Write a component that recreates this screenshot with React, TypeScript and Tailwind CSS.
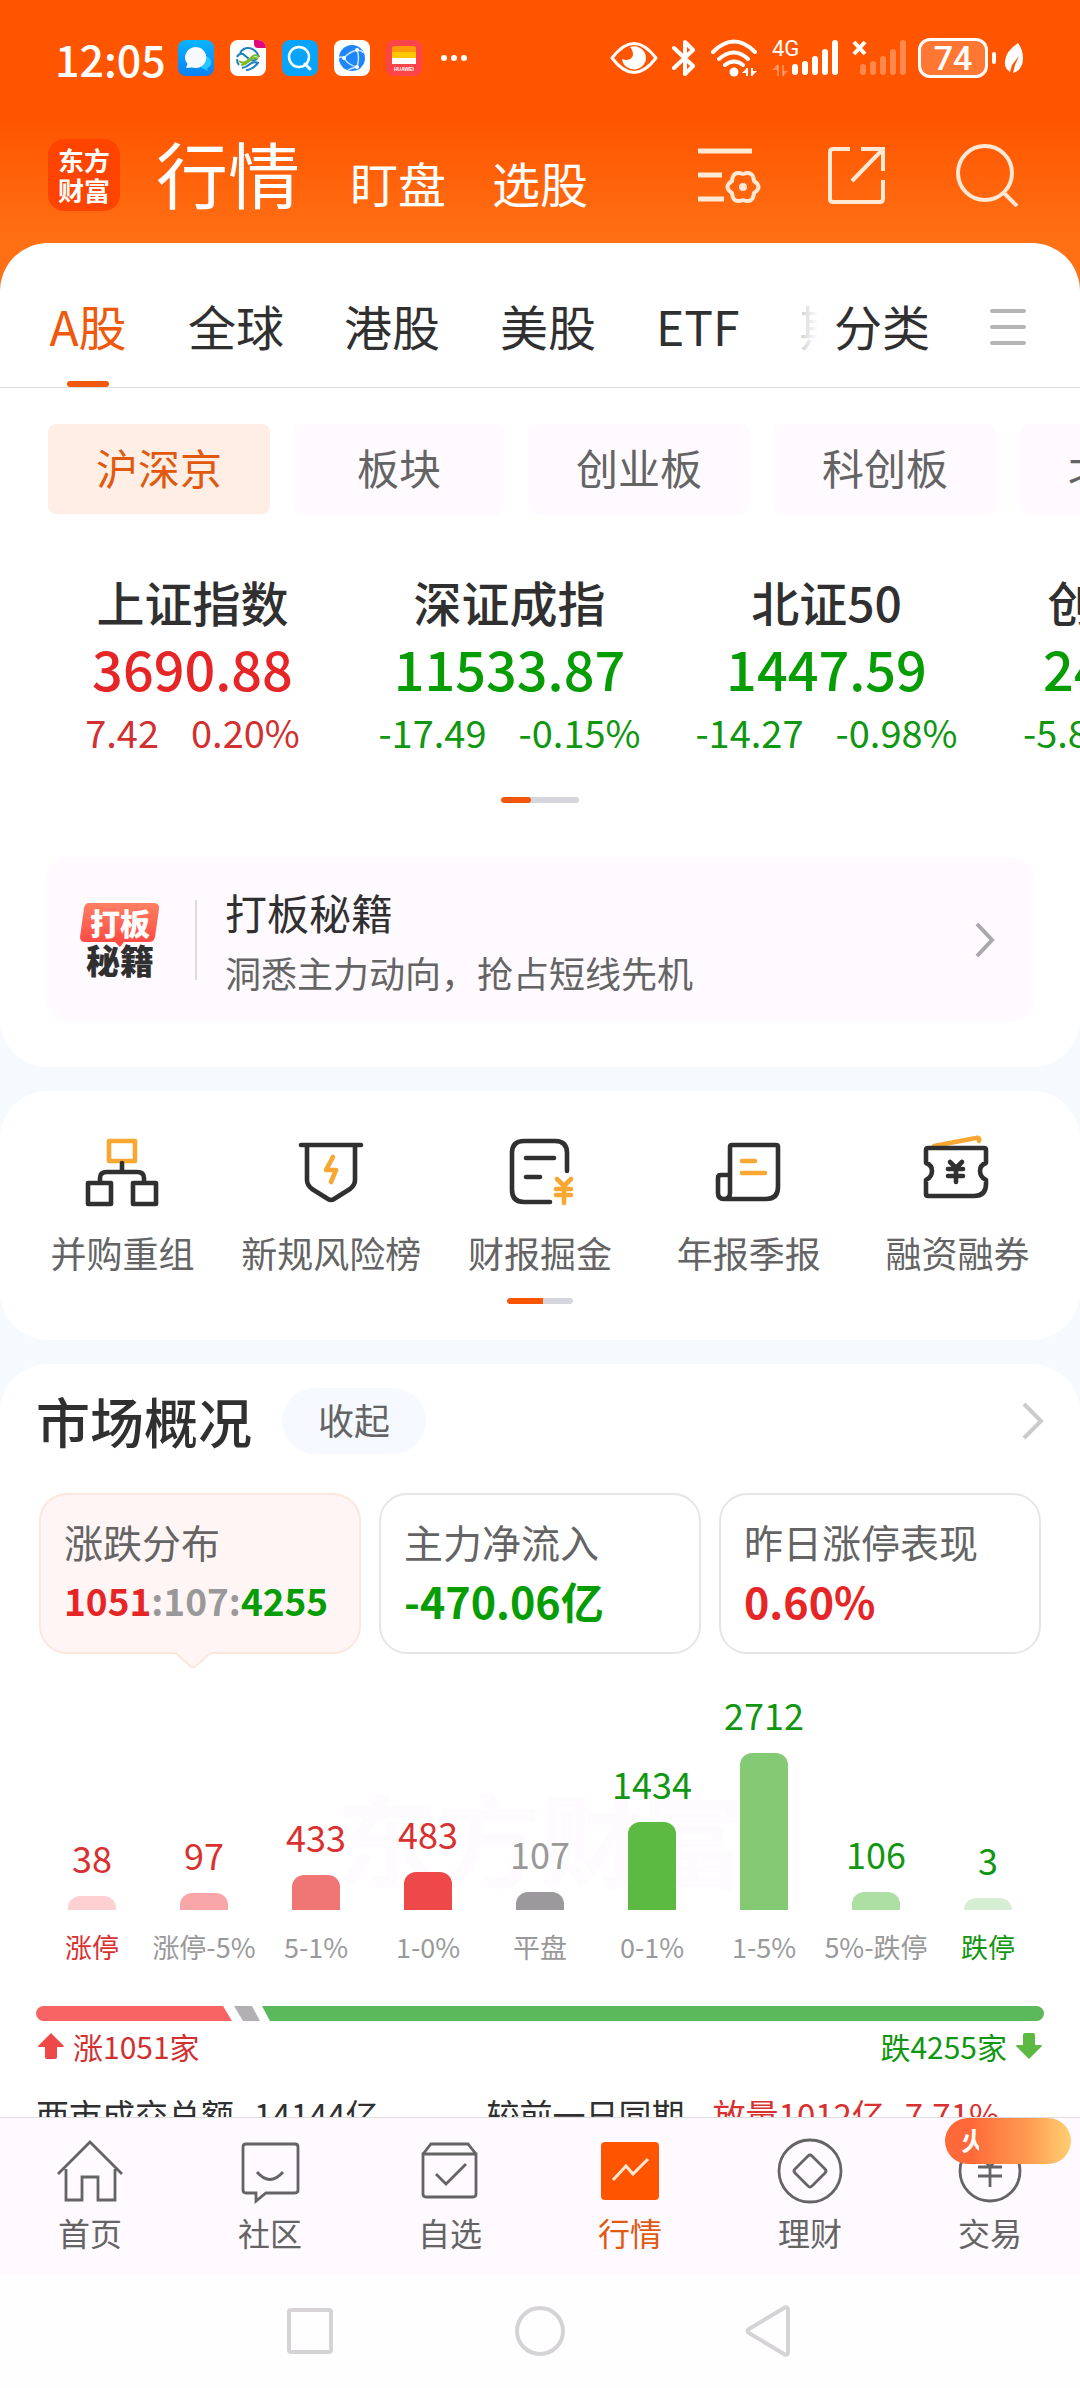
import React from "react";

const RED = "text-[#d93030]";
const GREEN = "text-[#109610]";

const markets = ["全球", "港股", "美股", "ETF", "期货"];
const boards = ["沪深京", "板块", "创业板", "科创板", "北交所"];

const indices = [
  { name: "上证指数", value: "3690.88", diff: "7.42", pct: "0.20%", up: true },
  { name: "深证成指", value: "11533.87", diff: "-17.49", pct: "-0.15%", up: false },
  { name: "北证50", value: "1447.59", diff: "-14.27", pct: "-0.98%", up: false },
  { name: "创业板指", value: "2458.75", diff: "-5.84", pct: "-0.24%", up: false },
];

const bars = [
  { count: 38, label: "涨停", h: 14, bar: "bg-[#fdd0d2]", num: RED, cap: RED },
  { count: 97, label: "涨停-5%", h: 17, bar: "bg-[#f8a6a8]", num: RED, cap: "text-[#999999]" },
  { count: 433, label: "5-1%", h: 35, bar: "bg-[#f07676]", num: RED, cap: "text-[#999999]" },
  { count: 483, label: "1-0%", h: 38, bar: "bg-[#ee4849]", num: RED, cap: "text-[#999999]" },
  { count: 107, label: "平盘", h: 18, bar: "bg-[#9b999c]", num: "text-[#999999]", cap: "text-[#999999]" },
  { count: 1434, label: "0-1%", h: 88, bar: "bg-[#5cb941]", num: GREEN, cap: "text-[#999999]" },
  { count: 2712, label: "1-5%", h: 157, bar: "bg-[#84ca74]", num: GREEN, cap: "text-[#999999]" },
  { count: 106, label: "5%-跌停", h: 18, bar: "bg-[#addfa4]", num: GREEN, cap: "text-[#999999]" },
  { count: 3, label: "跌停", h: 12, bar: "bg-[#d6efd4]", num: GREEN, cap: GREEN },
];

function StatusBar() {
  return (
    <div className="flex h-[116px] items-center justify-between pl-[55px] pr-[56px] text-white">
      <div className="flex items-center gap-4">
        <span className="-mr-1 w-[111px] text-[43px] leading-[52px] whitespace-nowrap font-medium">12:05</span>
        <svg width="36" height="36" viewBox="0 0 36 36">
          <defs>
            <linearGradient id="msg" x1="0" y1="0" x2="0" y2="1">
              <stop offset="0" stopColor="#08b4ff" />
              <stop offset="1" stopColor="#0a80f8" />
            </linearGradient>
          </defs>
          <rect width="36" height="36" rx="8" fill="url(#msg)" />
          <path d="M22 25a6 6 0 1 1 7 3l1 3-4-2a6 6 0 0 1-4-4Z" fill="#22c8ff" />
          <path d="M17 7a11 10.500 0 1 1-3 20.500L8 28l1.500-4A11 10.500 0 0 1 17 7Z" fill="#f6faff" />
        </svg>
        <svg width="36" height="36" viewBox="0 0 36 36">
          <rect width="36" height="36" rx="8" fill="#fff" />
          <path d="M24 0h4a8 8 0 0 1 8 8H28a4 4 0 0 1-4-4Z" fill="#e2077b" />
          <g fill="none" strokeWidth="2">
            <path d="M10 13q3-5 8-5t9 5l2 4M7 17q2-4 6-3l6 5q4 3 8 0" stroke="#1f7fc0" />
            <path d="M9 21q4 3 8 0l6-5q3-2 6 1M11 25l4-1 7-5q3-2 6 0" stroke="#7cb928" />
            <path d="M7 19q0 4 2 6M12 28q5-1 8-4t9-1M16 30q6 0 12-7" stroke="#1f7fc0" />
          </g>
        </svg>
        <svg width="36" height="36" viewBox="0 0 36 36">
          <rect width="36" height="36" rx="8" fill="#06a4fc" />
          <circle cx="17" cy="17" r="10" fill="none" stroke="#fff" strokeWidth="2.500" />
          <path d="m23 24 5 5" stroke="#fff" strokeWidth="3" strokeLinecap="round" />
        </svg>
        <svg width="36" height="36" viewBox="0 0 36 36">
          <rect width="36" height="36" rx="8" fill="#fff" />
          <circle cx="18" cy="18" r="13" fill="#1e86f8" />
          <path d="M10 18q5-6 13-8 3 8 0 17-9-2-13-9M10 18q-3-2-5 0M23 27q-5 1-9 3M23 10q4 0 7 3" fill="none" stroke="#c6e4ff" strokeWidth="1.500" />
          <circle cx="10" cy="18" r="2" fill="#fff" />
          <circle cx="23" cy="10" r="2" fill="#fff" />
          <circle cx="23" cy="27" r="2" fill="#fff" />
        </svg>
        <span className="relative block size-9 rounded-lg bg-[#fc4548]">
          <svg className="absolute left-1.5 top-1.5" width="24" height="18" viewBox="0 0 24 18">
            <path d="M0 2a2 2 0 0 1 2-2h20a2 2 0 0 1 2 2v4H0Z" fill="#ff9b08" />
            <path d="M0 6h24v6H0Z" fill="#ffc704" />
            <path d="M0 12h24v6H0Z" fill="#fff" />
          </svg>
          <span className="absolute inset-x-0 bottom-1 text-center font-['Liberation_Sans'] text-[5px] leading-[6px] font-bold">HUAWEI</span>
        </span>
        <svg className="ml-0.5" width="28" height="8" viewBox="0 0 28 8" fill="#fff">
          <circle cx="4" cy="4" r="3" />
          <circle cx="14" cy="4" r="3" />
          <circle cx="24" cy="4" r="3" />
        </svg>
      </div>
      <div className="flex items-center">
        <svg width="48" height="40" viewBox="0 0 48 40">
          <path d="M2 20Q24-9 46 20 24 49 2 20Z" fill="none" stroke="#fff" strokeWidth="3" strokeLinejoin="round" />
          <path d="M20 9a12 11.500 0 1 1-8 12q9 3 11-4 0-5-3-8Z" fill="#fff" />
        </svg>
        <svg className="ml-3.5" width="24" height="40" viewBox="0 0 24 40" fill="none" stroke="#fff" strokeWidth="4" strokeLinecap="round" strokeLinejoin="round">
          <path d="m2 10 19 18-8 8V4l8 8L2 30" />
        </svg>
        <svg className="ml-3.5" width="48" height="40" viewBox="0 0 48 40" fill="none" stroke="#fff" strokeWidth="4" strokeLinecap="round">
          <path d="M3 14Q24-7 45 14M9 21q15-13 29 0M15 27q9-7 18 0" />
          <circle cx="24" cy="34" r="4.500" fill="#fff" stroke="none" />
          <path d="M37 30v8M42 30v8" strokeWidth="2" strokeLinecap="butt" />
          <path d="m37 30-5 5h5ZM42 38l5-5h-5Z" fill="#fff" stroke="none" />
        </svg>
        <div className="relative ml-3.5">
          <span className="absolute left-0 top-0 font-['Roboto'] text-[22px] leading-[22px]">4G</span>
          <svg width="66" height="40" viewBox="0 0 66 40" stroke="#fff" strokeWidth="6" strokeLinecap="round">
            <path d="M23 29v5M33 26v8M43 21v13M53 14v20M63 5v29" />
            <path d="M6 27v11M11 27v11" strokeWidth="2" opacity=".3" strokeLinecap="butt" />
            <path d="m6 26-6 6h6ZM11 38l5-5h-5Z" fill="#fff" stroke="none" opacity=".3" />
          </svg>
        </div>
        <svg className="ml-3.5" width="54" height="40" viewBox="0 0 54 40" stroke="#fff" strokeLinecap="round">
          <path d="m2 4 11 12M13 4 2 16" strokeWidth="4" strokeLinecap="butt" />
          <path d="M11 29v5M21 26v8M31 21v13M41 14v20M51 5v29" strokeWidth="6" opacity=".3" />
        </svg>
        <div className="relative ml-3 flex h-10 w-[70px] items-center justify-center rounded-xl border-[3px] border-white bg-white/20">
          <span className="font-['Roboto'] text-[34px] leading-9 font-medium">74</span>
        </div>
        <span className="ml-1 h-3 w-1 rounded-full bg-white" />
        <svg className="ml-2" width="20" height="32" viewBox="0 0 20 32">
          <path d="M14 1q5 7 5 15 0 12-10 15l2-8 4-9-7 9-2 7Q0 26 1 19 2 9 14 1Z" fill="#fff" />
        </svg>
      </div>
    </div>
  );
}

function Header() {
  return (
    <header className="bg-linear-to-b from-[#ff5500] from-50% to-[#ff7014]">
      <StatusBar />
      <div className="flex h-[118px] items-center justify-between pl-12 pr-[60px] text-white">
        <div className="flex items-center">
          <div className="flex size-[72px] flex-col items-center justify-center rounded-2xl bg-[#ff4400] text-[26px] leading-[30px] font-bold">
            <span>东方</span>
            <span>财富</span>
          </div>
          <nav className="ml-9 flex items-baseline pt-1 leading-[84px]">
            <button className="text-[72px]">行情</button>
            <button className="ml-[50px] text-[48px]">盯盘</button>
            <button className="ml-[46px] text-[48px]">选股</button>
          </nav>
        </div>
        <div className="flex items-center gap-[66px] text-[#ffe8d4]">
          <button aria-label="设置">
            <svg width="64" height="64" viewBox="0 0 64 64" fill="none" stroke="currentColor" strokeWidth="5">
              <path d="M0 8h54M0 32h24M0 56h26" />
              <path d="M56 50Q55 61 45 57 35 61 34 50 25 44 34 38 35 27 45 31 55 27 56 38 65 44 56 50Z" strokeWidth="4" strokeLinejoin="round" />
              <circle cx="45" cy="44" r="4" fill="currentColor" stroke="none" />
            </svg>
          </button>
          <button aria-label="分享">
            <svg width="60" height="64" viewBox="0 0 60 64" fill="none" stroke="currentColor" strokeWidth="4">
              <path d="M22 6H5q-3 0-3 3v47q0 3 3 3h47q3 0 3-3V37M33 6h22v22M55 6 24 38" />
            </svg>
          </button>
          <button aria-label="搜索">
            <svg width="66" height="64" viewBox="0 0 66 64" fill="none" stroke="currentColor" strokeWidth="4">
              <circle cx="31" cy="30" r="27" />
              <path d="m49 49 14 14" />
            </svg>
          </button>
        </div>
      </div>
      <div className="h-[9px]" />
    </header>
  );
}

function Pager({ wide }: { wide?: boolean }) {
  return wide ? (
    <div className="mx-auto flex h-1.5 w-[78px] overflow-hidden rounded-full bg-[#d5d5dd]">
      <span className="w-[30px] rounded-full bg-[#f5560e]" />
    </div>
  ) : (
    <div className="mx-auto flex h-1.5 w-[66px] overflow-hidden rounded-full bg-[#d5d5dd]">
      <span className="w-9 rounded-l-full bg-[#f95604]" />
    </div>
  );
}

function QuoteCard() {
  return (
    <section className="-mt-12 overflow-hidden rounded-[48px] bg-white pb-[45px]">
      <div className="flex h-[145px] items-stretch border-b border-[#dedede] pl-12 pr-[54px] text-[48px] leading-[60px] text-[#303030]">
        <div className="relative flex min-w-0 flex-1 gap-[60px] overflow-hidden whitespace-nowrap">
          <button className="relative min-w-20 pt-5 text-[#f0590c]">
            A股
            <span className="absolute bottom-0 left-[19px] h-1.5 w-[42px] rounded-full bg-[#f0590c]" />
          </button>
          {markets.map((m) => (
            <button key={m} className="pt-5">
              {m}
            </button>
          ))}
          <span className="absolute inset-y-0 right-0 w-12 bg-linear-to-r from-white/40 to-white" />
        </div>
        <button className="ml-4 pt-5">分类</button>
        <button aria-label="菜单" className="ml-[60px] pt-6">
          <svg width="36" height="40" viewBox="0 0 36 40" stroke="#b5b3b6" strokeWidth="4" strokeLinecap="round">
            <path d="M2 4h32M2 20h32M2 36h32" />
          </svg>
        </button>
      </div>

      <div className="flex gap-6 overflow-hidden pl-12 pt-9 whitespace-nowrap">
        {boards.map((b, i) => (
          <button
            key={b}
            className={
              i === 0
                ? "h-[90px] shrink-0 rounded-lg bg-[#ffeee6] px-12 pb-1 text-[42px] leading-[60px] text-[#e0590f]"
                : "h-[90px] min-w-[210px] shrink-0 rounded-lg bg-[#fefaff] px-12 pb-1 text-[42px] leading-[60px] text-[#646464]"
            }
          >
            {b}
          </button>
        ))}
      </div>

      <div className="mt-[57px] flex overflow-hidden pl-[34px] text-center whitespace-nowrap">
        {indices.map((x) => (
          <div key={x.name} className={x.up ? "w-[317px] shrink-0 text-[#e62626]" : "w-[317px] shrink-0 text-[#069c04]"}>
            <h3 className="text-[48px] leading-[60px] font-medium text-[#303030]">{x.name}</h3>
            <p className="text-[54px] leading-[74px] font-medium">{x.value}</p>
            <p className={x.up ? "flex justify-center gap-8 text-[38px] leading-[54px] text-[#d13030]" : "flex justify-center gap-8 text-[38px] leading-[54px] text-[#109610]"}>
              <span>{x.diff}</span>
              <span>{x.pct}</span>
            </p>
          </div>
        ))}
      </div>
      <div className="mt-[38px]">
        <Pager wide />
      </div>

      <a href="#tips" className="mx-[46px] mt-[54px] flex h-[165px] items-center rounded-3xl bg-[#fefaff] pl-[34px] pr-[38px]">
        <div className="relative w-20 text-center font-black">
          <svg className="absolute left-0 top-0" width="80" height="46" viewBox="0 0 80 46">
            <defs>
              <linearGradient id="tip" x1="0" y1="0" x2="0" y2="1">
                <stop offset="0" stopColor="#fd8063" />
                <stop offset="1" stopColor="#ff4541" />
              </linearGradient>
            </defs>
            <path d="M9 1h65q6 0 5 6l-4 28q-1 5-6 5H44l-4 5-5-5H5q-5 0-5-5L4 6q1-5 5-5Z" fill="url(#tip)" />
          </svg>
          <span className="relative block text-[30px] leading-10 text-white">打板</span>
          <span className="block text-[34px] leading-9 text-[#303030]">秘籍</span>
        </div>
        <span className="ml-[35px] h-20 w-0.5 bg-[#dddce2]" />
        <div className="ml-7 flex-1 pt-1">
          <h3 className="text-[42px] leading-[60px] text-[#303030]">打板秘籍</h3>
          <p className="text-[36px] leading-[60px] text-[#646464]">洞悉主力动向，抢占短线先机</p>
        </div>
        <svg width="22" height="34" viewBox="0 0 22 34" fill="none" stroke="#a9a9a9" strokeWidth="4">
          <path d="m3 1 15 16L3 33" />
        </svg>
      </a>
    </section>
  );
}

const DARK = "#303030";
const AMBER = "#f8a732";

const tools = [
  {
    name: "并购重组",
    icon: (
      <>
        <path d="M29 11h26v20H29Z" stroke={AMBER} />
        <path d="M42 33v9M20 53v-5q0-6 7-6h30q7 0 7 6v5M8 53h23v21H8ZM53 53h23v21H53Z" />
      </>
    ),
  },
  {
    name: "新规风险榜",
    icon: (
      <>
        <path d="M12 15h60M18 15v35q0 5 5 9l16 10q3 2 6 0l16-10q5-4 5-9V15" />
        <path d="m44 27-7 13h10l-5 12" stroke={AMBER} />
      </>
    ),
  },
  {
    name: "财报掘金",
    icon: (
      <>
        <path d="M69 41V23q0-12-12-12H26q-12 0-12 12v37q0 12 12 12h26M28 28h28M28 47h14" />
        <path d="m59 49 7 7 7-7M66 56v17M58 59h15M58 65h15" stroke={AMBER} />
      </>
    ),
  },
  {
    name: "年报季报",
    icon: (
      <>
        <path d="M23 63V17q0-2 2-2h44q2 0 2 2v40q0 12-12 12H17M23 45h-9q-3 0-3 3v15q0 6 6 6t6-6" />
        <path d="M35 31h13M35 43h23" stroke={AMBER} />
      </>
    ),
  },
  {
    name: "融资融券",
    icon: (
      <>
        <path d="m18 16 42-8q4-1 3 3" stroke={AMBER} />
        <path d="M10 20q0-2 2-2h56q2 0 2 2v13q-6 2-6 8t6 9v4q0 12-12 12H12q-2 0-2-2V50q6-3 6-9t-6-8ZM34 32l6 6 6-6M40 38v14M32 39h15M32 46h15" />
      </>
    ),
  },
];

function ToolCard() {
  return (
    <section className="mt-6 rounded-[48px] bg-white pb-9 pt-[39px]">
      <div className="grid grid-cols-5 px-[18px]">
        {tools.map((t) => (
          <button key={t.name} className="flex flex-col items-center whitespace-nowrap">
            <svg width="84" height="84" viewBox="0 0 84 84" fill="none" stroke={DARK} strokeWidth="4.600" strokeLinecap="round" strokeLinejoin="round">
              {t.icon}
            </svg>
            <span className="mt-3 text-[36px] leading-[52px] text-[#646464]">{t.name}</span>
          </button>
        ))}
      </div>
      <div className="mt-5">
        <Pager />
      </div>
    </section>
  );
}

function Overview() {
  return (
    <section className="mt-6 rounded-t-[48px] bg-white pt-6">
      <div className="flex h-[66px] items-center justify-between pl-9 pr-[35px]">
        <div className="flex items-center">
          <h2 className="text-[54px] leading-[62px] font-medium text-[#303030]">市场概况</h2>
          <button className="ml-[30px] h-[66px] rounded-full bg-[#f6f9ff] px-9 pb-1 text-[36px] leading-[60px] text-[#646464]">收起</button>
        </div>
        <button aria-label="更多">
          <svg width="24" height="38" viewBox="0 0 24 38" fill="none" stroke="#cbcbcb" strokeWidth="4">
            <path d="m3 2 17 17L3 36" />
          </svg>
        </button>
      </div>

      <div className="mt-[39px] grid grid-cols-3 gap-[18px] px-[39px]">
        <button className="relative h-[161px] rounded-[28px] border-2 border-[#fde6dc] bg-[#fff5f5] pb-1.5 pl-[23px] text-left">
          <span className="block text-[39px] leading-[58px] text-[#646464]">涨跌分布</span>
          <span className="block text-[37px] leading-[60px] font-bold whitespace-nowrap">
            <span className="text-[#e62626]">1051</span>
            <span className="text-[#999999]">:107:</span>
            <span className="text-[#069c04]">4255</span>
          </span>
          <svg className="absolute -bottom-[18px] left-[132px]" width="40" height="18" viewBox="0 0 40 18">
            <path d="M0 0v1q3 0 5 2l12 11q3 3 6 0L35 3q2-2 5-2V0Z" fill="#fff5f5" />
            <path d="M0 1q3 0 5 2l12 11q3 3 6 0L35 3q2-2 5-2" fill="none" stroke="#fde6dc" strokeWidth="2" />
          </svg>
        </button>
        <button className="h-[161px] rounded-[28px] border-2 border-[#e6e6e6] pb-1.5 pl-[23px] text-left">
          <span className="block text-[39px] leading-[58px] text-[#646464]">主力净流入</span>
          <span className="block text-[43px] leading-[60px] font-bold text-[#069c04]">-470.06亿</span>
        </button>
        <button className="h-[161px] rounded-[28px] border-2 border-[#e6e6e6] pb-1.5 pl-[23px] text-left">
          <span className="block text-[39px] leading-[58px] text-[#646464]">昨日涨停表现</span>
          <span className="block text-[43px] leading-[60px] font-bold text-[#e62626]">0.60%</span>
        </button>
      </div>

      <div className="relative px-9">
        <span className="absolute inset-x-0 top-[112px] text-center text-[102px] leading-[140px] font-bold text-[#fefbfe]">东方财富</span>
        <div className="relative grid h-64 grid-cols-9 items-end">
          {bars.map((b) => (
            <div key={b.label} className="flex flex-col items-center">
              <span className={`mb-[15px] text-[36px] leading-[48px] ${b.num}`}>{b.count}</span>
              <span className={`w-12 rounded-t-xl ${b.bar}`} style={{ height: b.h }} />
            </div>
          ))}
        </div>
        <div className="relative mt-[17px] grid grid-cols-9 text-center text-[27px] leading-10 whitespace-nowrap">
          {bars.map((b) => (
            <span key={b.label} className={b.cap}>
              {b.label}
            </span>
          ))}
        </div>
      </div>

      <div className="mt-[39px] flex h-[15px] px-9">
        <span className="w-[196px] rounded-l-full bg-[#f86463] [clip-path:polygon(0_0,calc(100%_-_9px)_0,100%_100%,0_100%)]" />
        <span className="ml-0.5 w-[26px] bg-[#b2b0b3] [clip-path:polygon(0_0,calc(100%_-_8px)_0,100%_100%,9px_100%)]" />
        <span className="ml-0.5 flex-1 rounded-r-full bg-[#5bb95b] [clip-path:polygon(0_0,100%_0,100%_100%,8px_100%)]" />
      </div>
      <div className="mt-[5px] flex justify-between px-[37px] text-[30px] leading-10">
        <span className="flex items-center gap-2 text-[#d13030]">
          <svg width="28" height="28" viewBox="0 0 28 28" fill="#ee4849">
            <path d="m14 1 13 13q0 1-1 1h-6v10q0 2-2 2h-8q-2 0-2-2V15H2q-1 0-1-1Z" />
          </svg>
          涨1051家
        </span>
        <span className="flex items-center gap-2 text-[#109610]">
          跌4255家
          <svg width="28" height="28" viewBox="0 0 28 28" fill="#5cb941">
            <path d="m14 27 13-13q0-1-1-1h-6V3q0-2-2-2h-8Q8 1 8 3v10H2q-1 0-1 1Z" />
          </svg>
        </span>
      </div>
      <div className="mt-6 flex px-9 text-[33px] leading-[48px] whitespace-nowrap text-[#303030]">
        <span>两市成交总额</span>
        <span className="ml-5">14144亿</span>
        <span className="ml-[108px]">较前一日同期</span>
        <span className="ml-7 text-[#d93030]">放量1012亿</span>
        <span className="ml-5 text-[#d93030]">7.71%</span>
      </div>
    </section>
  );
}

const navItems = [
  {
    name: "首页",
    icon: <path d="m3 38 32-32 32 32M11 33v31h16V41h16v23h17V33" />,
  },
  {
    name: "社区",
    icon: <path d="M11 8h49q3 0 3 3v43q0 3-3 3H31l-10 8v-8H11q-3 0-3-3V11q0-3 3-3ZM22 36q13 15 26 0" />,
  },
  {
    name: "自选",
    icon: <path d="M8 18v40q0 3 3 3h47q3 0 3-3V18Zm0 0 8-10h37l8 10M21 38l10 10 20-20" />,
  },
  {
    name: "行情",
    active: true,
    icon: (
      <>
        <rect x="6" y="6" width="58" height="58" rx="4" fill="#ff5500" stroke="none" />
        <path d="m18 44 13-14 7 8 15-15" stroke="#ffe8d4" strokeWidth="3" />
      </>
    ),
  },
  {
    name: "理财",
    icon: (
      <>
        <circle cx="35" cy="35" r="31" />
        <path d="m33 20-13 13q-2 2 0 4l13 13q2 2 4 0l13-13q2-2 0-4L37 20q-2-2-4 0Z" />
      </>
    ),
  },
  {
    name: "交易",
    icon: (
      <>
        <circle cx="35" cy="35" r="30" />
        <path d="m26 20 9 11 9-11M23 31h24M23 40h24M35 31v20" />
      </>
    ),
  },
];

function BottomNav() {
  return (
    <nav className="relative grid h-[157px] shrink-0 grid-cols-6 border-t border-[#dedede] bg-[#fefaff]">
      {navItems.map((n) => (
        <button key={n.name} className={n.active ? "flex flex-col items-center pt-[18px] text-[#e0590f]" : "flex flex-col items-center pt-[18px] text-[#646464]"}>
          <svg width="70" height="70" viewBox="0 0 70 70" fill="none" stroke="currentColor" strokeWidth="2.800">
            {n.icon}
          </svg>
          <span className="mt-1 text-[32px] leading-[44px]">{n.name}</span>
        </button>
      ))}
      <div className="absolute right-[9px] top-0 h-[46px] w-[126px] rounded-full bg-linear-to-r from-[#ff6838] from-20% via-[#ff9a50] via-65% to-[#ffcf72]">
        <span className="ml-4 mt-2 block w-[18px] overflow-hidden text-[26px] leading-7 font-bold text-white">火</span>
      </div>
    </nav>
  );
}

function SystemNav() {
  return (
    <div className="flex h-[114px] shrink-0 items-center justify-center gap-[178px] bg-[#fefdff]">
      <button aria-label="最近任务">
        <svg width="50" height="52" viewBox="0 0 50 52" fill="none" stroke="#d5d3d6" strokeWidth="4">
          <rect x="4" y="5" width="42" height="42" rx="2" />
        </svg>
      </button>
      <button aria-label="主屏幕">
        <svg width="54" height="54" viewBox="0 0 54 54" fill="none" stroke="#d5d3d6" strokeWidth="4">
          <circle cx="27" cy="27" r="23" />
        </svg>
      </button>
      <button aria-label="返回">
        <svg width="50" height="54" viewBox="0 0 50 54" fill="none" stroke="#d5d3d6" strokeWidth="4" strokeLinejoin="round">
          <path d="M43 5v44q-1 3-4 1L4 29q-3-2 0-4L39 4q3-2 4 1Z" />
        </svg>
      </button>
    </div>
  );
}

export default function App() {
  return (
    <div className="flex h-screen flex-col bg-[#f6faff] font-['Noto_Sans_CJK_SC',sans-serif]">
      <main className="min-h-0 flex-1 overflow-hidden">
        <Header />
        <div className="h-12 bg-[#ff7014]" />
        <QuoteCard />
        <ToolCard />
        <Overview />
      </main>
      <BottomNav />
      <SystemNav />
    </div>
  );
}
